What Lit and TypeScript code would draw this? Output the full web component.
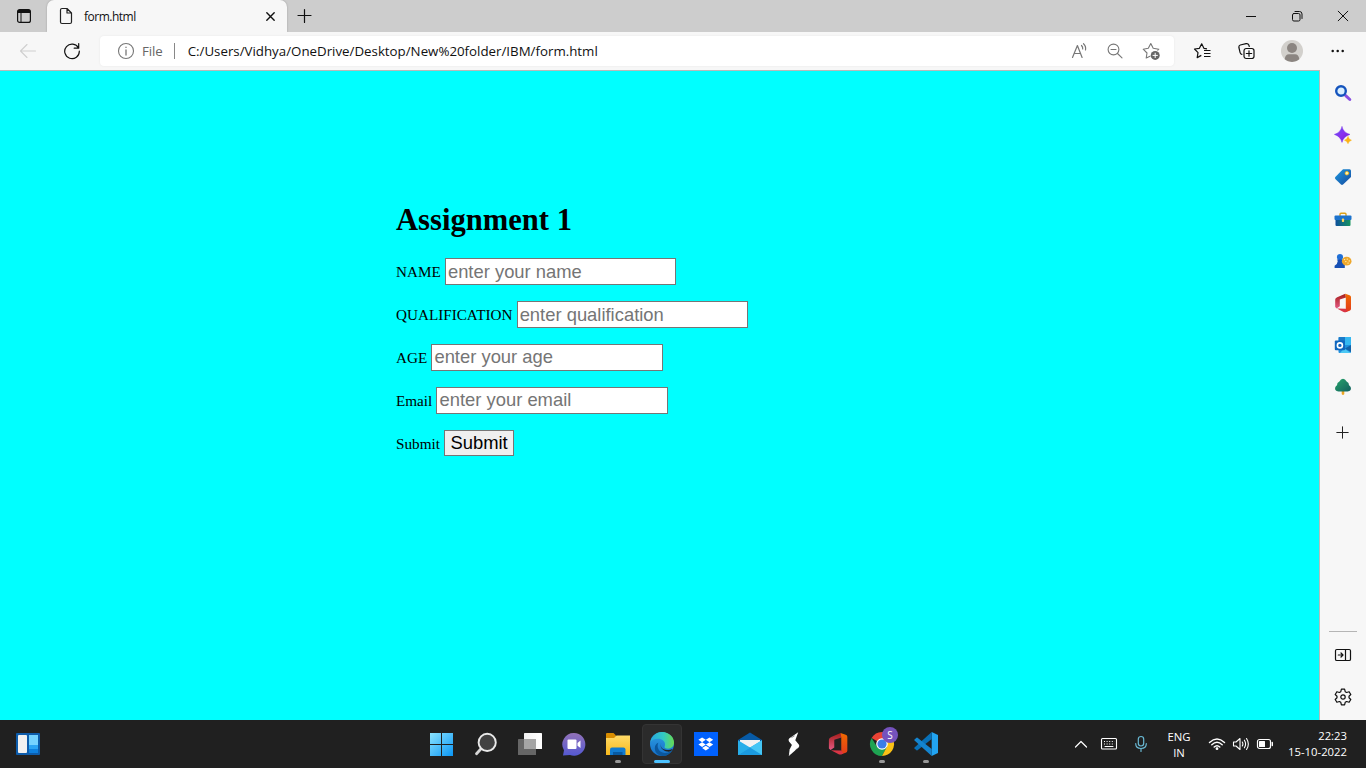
import { LitElement, html, css, svg } from "lit";
import { customElement, property } from "lit/decorators.js";

const icon = (w: number, h: number, body: unknown) =>
  html`<svg width=${w} height=${h} viewBox="0 0 ${w} ${h}" fill="none" stroke-linecap="round" stroke-linejoin="round">${body}</svg>`;

const officeShape = svg`
  <path d="M3.2 4.2L11.3 .8L12 4.6L5.8 6.5V13.2L2.6 15.4L1.2 14V6.6Q1.2 5 3.2 4.2Z" fill="url(#officeLeft)"/>
  <path d="M11.2 .8L15.6 2.2Q17 2.7 17 4V16Q17 17.3 15.6 17.8L11.4 19.2L11.8 15.8V4.7Z" fill="url(#officeRight)"/>
  <path d="M3 15.6L11.8 15.8L13.5 18.5L11.2 19.2Q10.4 19.3 9.6 19Z" fill="#d93545"/>
  <defs>
    <linearGradient id="officeLeft" x1="0" y1="0" x2="0" y2="1"><stop stop-color="#a51d1a"/><stop offset="1" stop-color="#e45a84"/></linearGradient>
    <linearGradient id="officeRight" x1="0" y1="0" x2="0" y2="1"><stop stop-color="#f06a00"/><stop offset="1" stop-color="#e23a1c"/></linearGradient>
  </defs>`;

const sidebarIcons = [
  icon(18, 18, svg`
    <path d="M11.7 11.7L15.8 15.5" stroke="#8a4fe0" stroke-width="3"/>
    <circle cx="7" cy="7" r="4.8" fill="#d9f0ff" stroke="#1554bd" stroke-width="2.4"/>`),
  icon(18, 18, svg`
    <path d="M8 .8Q9.2 6.6 16 8.4Q9.6 10.2 8 16.4Q6.4 10.2 .4 8.4Q6.6 6.6 8 .8Z" fill="url(#spark)" stroke="#7c35ea" stroke-width=".5"/>
    <path d="M14 10.6Q14.7 13.4 17.5 14.2Q14.8 15 14 17.8Q13.2 15 10.4 14.2Q13.3 13.4 14 10.6Z" fill="#fcb316" stroke="#fcb316" stroke-width=".4"/>
    <defs><linearGradient id="spark" x1="0" y1="0" x2="1" y2="1"><stop stop-color="#5b5bf6"/><stop offset=".5" stop-color="#8b2ff0"/><stop offset="1" stop-color="#6b22c9"/></linearGradient></defs>`),
  icon(18, 18, svg`
    <path d="M9 1.2H15.5Q17 1.2 17 2.7V9L9 16.5Q8 17.3 7 16.5L1.3 11Q.5 10 1.3 9Z" fill="url(#tag)"/>
    <circle cx="12.9" cy="5.2" r="1.8" fill="#fff3a8" stroke="#f5b51b" stroke-width=".8"/>
    <defs><linearGradient id="tag" x1="0" y1="0" x2="1" y2="1"><stop stop-color="#1e9ae0"/><stop offset="1" stop-color="#164a9f"/></linearGradient></defs>`),
  icon(18, 18, svg`
    <path d="M6 6V4.2Q6 3.2 7 3.2H11Q12 3.2 12 4.2V6" stroke="#dda21b" stroke-width="1.4"/>
    <rect x="1.5" y="8" width="15" height="8" rx="1" fill="url(#toolbox)"/>
    <rect x=".5" y="5.5" width="17" height="4.5" rx="1" fill="#1c73cc"/>
    <rect x="7.9" y="8.5" width="2.2" height="3.4" rx=".7" fill="#ffd65c"/>
    <defs><linearGradient id="toolbox"><stop stop-color="#0e4f9c"/><stop offset="1" stop-color="#16945f"/></linearGradient></defs>`),
  icon(18, 18, svg`
    <circle cx="6" cy="5" r="3.1" fill="#1f6fd6"/>
    <path d="M2.8 7.5H9.2L8.2 9Q8.4 11.6 10.8 13V16H.6V13.8Q3.6 12 3.8 9Z" fill="#1750b4"/>
    <ellipse cx="12.7" cy="9.2" rx="4.8" ry="4.4" fill="#eea72b"/>
    <path d="M10.5 7.6H10.6M13.2 7.1H13.3M15.2 8.9H15.3M11.8 9.6H11.9M14 11.1H14.1" stroke="#fff0b5" stroke-width="1.4"/>`),
  icon(18, 20, officeShape),
  icon(18, 18, svg`
    <rect x="4.5" y="1" width="12.5" height="16" rx="1" fill="#1f8fdd"/>
    <path d="M4.7 1.2H11V6H4.7Z" fill="#1a7ac8"/><path d="M11 1H17V9H11Z" fill="#35b8f1"/>
    <path d="M17 9V16L11 12.5Z" fill="#1262a8"/><path d="M6 17H17L10 12.4Z" fill="#4cc8f4"/>
    <rect x=".8" y="4.5" width="10.2" height="9.8" rx="1" fill="#1067be"/>
    <circle cx="5.9" cy="9.4" r="2.5" stroke="#fff" stroke-width="1.6"/>`),
  icon(18, 18, svg`
    <path d="M7.7 12H10.3V16Q9 17.8 7.7 16Z" fill="#eda522"/>
    <path d="M9 .8Q11.2 1 12.6 3.6Q15.2 4.8 15 7.2Q17.8 9.4 16.6 12Q15.6 13.6 13 13.4H5Q2.4 13.6 1.4 12Q.2 9.4 3 7.2Q2.8 4.8 5.4 3.6Q6.8 1 9 .8Z" fill="url(#tree)"/>
    <defs><linearGradient id="tree" x1="0" y1="0" x2="1" y2="1"><stop stop-color="#27a56b"/><stop offset="1" stop-color="#12605e"/></linearGradient></defs>`),
];

const taskIcons = [
  icon(28, 28, svg`
    <path d="M2 3H13V14H2ZM14 3H25V14H14ZM2 15H13V26H2ZM14 15H25V26H14Z" fill="url(#win)"/>
    <defs><linearGradient id="win" x1="0" y1="0" x2="1" y2="1"><stop stop-color="#8ce4ff"/><stop offset="1" stop-color="#0a96f5"/></linearGradient></defs>`),
  icon(28, 28, svg`
    <path d="M9.3 18.5L4.5 23.7" stroke="#d7d7d7" stroke-width="2.8"/>
    <circle cx="15.2" cy="12.4" r="8.6" fill="#414141" stroke="#e9e9e9" stroke-width="1.9"/>`),
  icon(28, 28, svg`
    <rect x="8" y="3" width="18" height="16" rx=".6" fill="url(#tv)"/>
    <rect x="2" y="9" width="18" height="16" rx=".6" fill="#666"/>
    <rect x="8" y="9" width="12" height="10" fill="#a5a5a5"/>
    <defs><linearGradient id="tv"><stop stop-color="#f2f2f2"/><stop offset="1" stop-color="#fff"/></linearGradient></defs>`),
  icon(28, 28, svg`
    <path d="M14 3A11.4 11.4 0 1 1 10 25.1L3 25.6L4 20.3A11.4 11.4 0 0 1 14 3Z" fill="url(#chat)"/>
    <rect x="7.5" y="9.5" width="9" height="9.5" rx="1" fill="#fff"/><path d="M17.5 13L20.5 10.5V18L17.5 15.7Z" fill="#fff"/>
    <defs><linearGradient id="chat" x1="0" y1="0" x2="0" y2="1"><stop stop-color="#9272b8"/><stop offset="1" stop-color="#5459d2"/></linearGradient></defs>`),
  icon(28, 28, svg`
    <path d="M2 4Q2 3 3 3H9.5L12 5.5V10H2Z" fill="#d98d00"/>
    <path d="M2 8H10L12.5 5.5H26V25H2Z" fill="url(#folder)"/>
    <path d="M6 25V19.5Q6 17.5 8 17.5H19.5Q21.5 17.5 21.5 19.5V25Z" fill="#117bd0"/><path d="M9 25V22H18.5V25Z" fill="#0759a1"/>
    <defs><linearGradient id="folder" x1="0" y1="0" x2="0" y2="1"><stop stop-color="#ffdb68"/><stop offset="1" stop-color="#f9b91c"/></linearGradient></defs>`),
  icon(28, 28, svg`
    <circle cx="14" cy="14" r="12" fill="url(#edgeBlue)"/>
    <path d="M2.3 12.2C3.2 6.4 8 2 14 2C21 2 26 7.2 26 12.5C26 17 22.5 19.2 18.6 18.6C15.5 18 16.8 16.8 17 14.8C17.3 11.2 14 8.8 10.3 8.8C6 8.8 3.3 10.6 2.3 12.2Z" fill="url(#edgeGreen)"/>
    <path d="M10.3 12.8C8.3 17 10.8 22.6 16.6 23C20.2 23.2 23.2 21.5 24.5 19.7C22.6 23.8 18.5 26 14.4 26C9.5 25.5 6.8 22 6.8 18.3C6.8 15.5 8.3 13.6 10.3 12.8Z" fill="#0b579c"/>
    <path d="M13.2 13C11.7 15.6 13.6 19.8 19 20C21.4 20.1 23.5 19.4 24.8 18.7C23.9 20.9 22 21.8 19.5 21.6C14.6 21 11.2 16.6 13.2 13Z" fill="#202020"/>
    <defs>
      <linearGradient id="edgeBlue" x1="0" y1="0" x2="0" y2="1"><stop stop-color="#2e9fe4"/><stop offset="1" stop-color="#146fc8"/></linearGradient>
      <linearGradient id="edgeGreen"><stop stop-color="#27a6e0"/><stop offset=".55" stop-color="#32c9c3"/><stop offset="1" stop-color="#67db50"/></linearGradient>
    </defs>`),
  icon(28, 28, svg`
    <rect x="2" y="2" width="24" height="24" fill="#0061fe"/>
    <path d="M10.1 7.5L13.8 9.8L10.1 12.2L6.4 9.8ZM17.5 7.5L21.2 9.8L17.5 12.2L13.8 9.8ZM10.1 12.2L13.8 14.5L10.1 16.9L6.4 14.5ZM17.5 12.2L21.2 14.5L17.5 16.9L13.8 14.5ZM13.8 15.7L17.5 18L13.8 20.4L10.1 18Z" fill="#fff"/>`),
  icon(28, 28, svg`
    <path d="M2 10L14 2.5L26 10V16H2Z" fill="#075aa6"/><path d="M4 10H24V14L14 18L4 14Z" fill="#f2f2f2"/>
    <path d="M2 10.2L14 17.5L26 10.2V25H2Z" fill="#28aee9"/><path d="M2 25L26 10.2V25Z" fill="#45c6f5"/><path d="M2 25L14 17.5L26 25Z" fill="#1b9be0"/>`),
  icon(28, 28, svg`<path d="M18.2 2.2L9.4 8.2Q7.8 9.8 9 11.4L12.6 15.8L8.8 26L18.6 17.4Q20 16 18.8 14.4L15.3 10.2Z" fill="#fff"/><path d="M12.8 13.2L9.6 19.4L8.8 26L13.2 18Z" fill="#fff"/><path d="M14.2 6L11.8 7.4M15.5 20.2L17 18.8" stroke="#202020" stroke-width=".5"/>`),
  html`<svg width="28" height="28" viewBox="-3 -1.8 24 24">${officeShape}</svg>`,
  icon(28, 28, svg`
    <path d="M14 14L3.6 8A12 12 0 0 1 24.4 8L25 9H14Z" fill="#ea4335"/>
    <path d="M3.6 8A12 12 0 0 0 14 26L19 16.5L14 14L9 16.7Z" fill="#1ea352"/>
    <path d="M14 26A12 12 0 0 0 25 9H14L19 16.5Z" fill="#fbc116"/>
    <circle cx="14" cy="14" r="5.8" fill="#fff"/><circle cx="14" cy="14" r="4.6" fill="#3b7de8"/>`),
  icon(28, 28, svg`
    <path d="M19.7 2L26 5V23L19.7 26Z" fill="#22a4f1"/>
    <path d="M19.7 2V9L5.5 20.3Q5 20.6 4.5 20.2L2.5 18.5Q2 18 2.5 17.5Z" fill="#0870b7"/>
    <path d="M19.7 26V19L5.5 7.8Q5 7.4 4.5 7.8L2.5 9.6Q2 10.1 2.5 10.6Z" fill="#1484cf"/>`),
];

@customElement("form-row")
class FormRow extends LitElement {
  @property() label = "";
  @property() hint = "";
  @property({ type: Boolean }) submit = false;

  static styles = css`
    :host { display: flex; align-items: flex-start; height: 43px; gap: 4.2px; }
    label { font: 15.2px/17px "Liberation Serif", serif; padding-top: 5px; color: #000; white-space: nowrap; }
    input, button { box-sizing: border-box; font: 18.4px "Liberation Sans", sans-serif; border: 1px solid #767676; border-radius: 0; margin: 0; }
    input { width: 231.4px; height: 27px; padding: 0 2px; background: #fff; }
    input::placeholder { color: #757575; opacity: 1; }
    :host([raised]) input { padding-bottom: 2px; }
    button { width: 70px; height: 26px; padding: 0; background: #efefef; color: #000; }
  `;

  render() {
    return html`<label>${this.label}</label>${this.submit
      ? html`<button>Submit</button>`
      : html`<input placeholder=${this.hint} />`}`;
  }
}

@customElement("app-root")
class AppRoot extends LitElement {
  static styles = css`
    :host { display: flex; flex-direction: column; width: 1366px; height: 768px; overflow: hidden; font-family: "Open Sans", "Noto Sans", sans-serif; color: #111; }
    svg { display: block; flex: none; }
    .tabs { display: flex; height: 32px; background: #cdcdcd; align-items: stretch; flex: none; }
    .cell { display: flex; align-items: center; justify-content: center; flex: none; }
    .actions { width: 47px; }
    .tab { display: flex; align-items: center; width: 240px; box-sizing: border-box; padding: 0 9px 0 11px; background: #f7f7f7; border-radius: 7px 7px 0 0; font-size: 12px; box-shadow: 0 0 2px #999; clip-path: inset(0 -3px 0 -3px); }
    .title { flex: 1; padding-left: 10px; letter-spacing: -0.5px; }
    .new { width: 35px; }
    .win { display: flex; margin-left: auto; }
    .win .cell { width: 46px; }
    .tools { display: flex; height: 38px; align-items: center; background: #f7f7f7; flex: none; box-sizing: border-box; }
    .back { width: 56px; }
    .reload { width: 32px; margin-right: 12px; }
    .address { display: flex; align-items: center; box-sizing: border-box; width: 1074px; height: 30px; background: #fff; border-radius: 4px; padding: 0 5px 0 17px; font-size: 13.3px; box-shadow: 0 0 2px #e4e4e4; }
    .file { color: #666; padding: 0 11px 0 7px; letter-spacing: -0.1px; }
    .bar { width: 1px; height: 16px; background: #888; margin-right: 13px; }
    .url { flex: 1; white-space: nowrap; color: #111; }
    .address .cell { width: 36px; }
    .right { display: flex; padding-left: 5px; }
    .right .cell { width: 45.2px; }
    .main { display: flex; height: 650px; flex: none; }
    .page { width: 1320px; box-sizing: border-box; border-top: 1px solid #b9b9b9; border-right: 1px solid #b9b9b9; background: #0ff; padding: 132px 0 0 396px; }
    h1 { margin: 0 0 21px; font: bold 30.6px/34px "Liberation Serif", serif; color: #000; }
    .side { display: flex; flex-direction: column; width: 46px; background: #f7f7f7; align-items: center; padding: 2px 0; box-sizing: border-box; }
    .side .cell { width: 46px; height: 42px; }
    .side .plus { height: 50px; }
    .rule { margin-top: auto; width: 28px; height: 1px; background: #b5b5b5; margin-bottom: 2px; }
    .taskbar { display: grid; grid-template-columns: 420px 528px 1fr; height: 48px; background: #202020; color: #fff; }
    .widgets { display: flex; align-items: center; padding-left: 16px; }
    .apps { display: flex; }
    .app { display: flex; width: 44px; position: relative; align-items: center; justify-content: center; }
    .app.active::before { content: ""; position: absolute; inset: 4px 2px; box-sizing: border-box; border: 1px solid #343434; border-radius: 4px; background: #2b2b2b; }
    .app svg { position: relative; }
    .app.open::after { content: ""; position: absolute; bottom: 5px; left: 19px; width: 6px; height: 3px; border-radius: 2px; background: #989898; }
    .app.active::after { left: 14px; width: 16px; background: #4cc2ff; }
    .badge { position: absolute; left: 22px; top: 7px; width: 16px; height: 16px; border-radius: 8px; background: #7552bd; font: 10px/16px "Open Sans", sans-serif; text-align: center; color: #fff; }
    .tray { display: flex; align-items: center; font-size: 11.3px; line-height: 16px; }
    .up { width: 28px; margin-left: 119px; }
    .kb { width: 28px; }
    .mic { width: 36px; }
    .lang { width: 40px; text-align: center; letter-spacing: 0; padding-top: 2px; }
    .net { width: 36px; }
    .vol { width: 12px; }
    .bat { width: 36px; }
    .clock { margin-left: auto; padding-right: 19px; text-align: right; }
  `;

  render() {
    return html`
      <div class="tabs">
        <div class="cell actions">${icon(16, 16, svg`<rect x="1.6" y="1.6" width="12.8" height="12.8" rx="2" stroke="#111" stroke-width="1.2"/><path d="M2 2H14V5H2Z" fill="#111"/><path d="M5 5V14" stroke="#111"/>`)}</div>
        <div class="tab">
          ${icon(16, 18, svg`<path d="M2.5 3Q2.5 1.5 4 1.5H9L13.5 6V15Q13.5 16.5 12 16.5H4Q2.5 16.5 2.5 15ZM9 1.7V6H13.3" stroke="#222" stroke-width="1.2"/>`)}
          <span class="title">form.html</span>
          ${icon(16, 16, svg`<path d="M4.8 4.8L12.2 12.2M12.2 4.8L4.8 12.2" stroke="#111" stroke-width="1.4"/>`)}
        </div>
        <div class="cell new">${icon(16, 16, svg`<path d="M7.5 1.5V14.5M1 7.5H14" stroke="#111" stroke-width="1.2"/>`)}</div>
        <div class="win">
          <div class="cell">${icon(12, 12, svg`<path d="M1 6.5H11" stroke="#111" stroke-linecap="butt"/>`)}</div>
          <div class="cell">${icon(12, 12, svg`<rect x="1.5" y="3.5" width="7.5" height="7.5" rx="1.4" stroke="#111"/><path d="M4 1.5H8.5Q11 1.5 11 4V8.5" stroke="#111"/>`)}</div>
          <div class="cell">${icon(12, 12, svg`<path d="M1.2 1.2L10.8 10.8M10.8 1.2L1.2 10.8" stroke="#111"/>`)}</div>
        </div>
      </div>
      <div class="tools">
        <div class="cell back">${icon(18, 16, svg`<path d="M16.5 8H1.5M8 1.5L1.5 8L8 14.5" stroke="#cfcfcf" stroke-width="1.1"/>`)}</div>
        <div class="cell reload">${icon(18, 18, svg`<path d="M15.5 6A7.3 7.3 0 1 0 16.3 9M15.7 1.6V6.2H11.2" stroke="#111" stroke-width="1.2"/>`)}</div>
        <div class="address">
          ${icon(18, 18, svg`<circle cx="9" cy="9" r="7.5" stroke="#777" stroke-width="1.1"/><path d="M9 8V13M9 5.2V5.4" stroke="#777" stroke-width="1.3"/>`)}
          <span class="file">File</span><span class="bar"></span>
          <span class="url">C:/Users/Vidhya/OneDrive/Desktop/New%20folder/IBM/form.html</span>
          <div class="cell">${icon(18, 18, svg`<path d="M2.5 15.5L7.4 3.5L12.1 15.5M4.2 11.5H10.4M11.5 3.5Q13 5 12.7 7M13.5 1.7Q16.2 4 15.5 8" stroke="#777" stroke-width="1.2"/>`)}</div>
          <div class="cell">${icon(18, 18, svg`<circle cx="7.5" cy="7.5" r="5.4" stroke="#777" stroke-width="1.1"/><path d="M11.5 11.5L16 15.8M5 7.5H10" stroke="#777" stroke-width="1.1"/>`)}</div>
          <div class="cell">${icon(18, 18, svg`<path d="M15.8 8.2L16.8 7.2L11.2 6.3L8.8 1.5L6.3 6.3L1.2 7.2L5 11L4.2 16L8 14.2" stroke="#777" stroke-width="1.1"/><circle cx="13.2" cy="13.4" r="4.5" fill="#666"/><path d="M13.2 11.2V15.6M11 13.4H15.4" stroke="#fff"/>`)}</div>
        </div>
        <div class="right">
          <div class="cell">${icon(18, 18, svg`<path d="M14 6.8L10.9 6.3L8.7 1.8L6.4 6.3L1.5 7L5 10.6L4.2 15.6L8.3 13.4M11 8.5H17.5M11 11.5H17.5M11 14.5H17.5" stroke="#111" stroke-width="1.2" stroke-linecap="butt"/>`)}</div>
          <div class="cell">${icon(18, 18, svg`<rect x="6" y="6.5" width="10" height="10" rx="2.2" stroke="#111" stroke-width="1.2"/><path d="M11 8.8V14.2M8.3 11.5H13.7M3.9 12.4Q2.5 12 2.1 10.6L.9 5.5Q.6 3.6 2.3 3L8.1 1.6Q10.1 1.2 10.8 3L11.3 4.5" stroke="#111" stroke-width="1.2"/>`)}</div>
          <div class="cell">${icon(24, 24, svg`<circle cx="12" cy="12" r="11" fill="#d2d0cc"/><circle cx="12" cy="9" r="5" fill="#8b8581"/><path d="M4.7 20.2Q5.3 15.3 9 15.3H15Q18.7 15.3 19.3 20.2A11 11 0 0 1 4.7 20.2Z" fill="#8b8581"/>`)}</div>
          <div class="cell">${icon(16, 16, svg`<path d="M3.7 8V8.01M8.7 8V8.01M13.7 8V8.01" stroke="#111" stroke-width="2.5"/>`)}</div>
        </div>
      </div>
      <div class="main">
        <div class="page">
          <h1>Assignment 1</h1>
          <form-row label="NAME" hint="enter your name"></form-row>
          <form-row label="QUALIFICATION" hint="enter qualification"></form-row>
          <form-row label="AGE" hint="enter your age" raised></form-row>
          <form-row label="Email" hint="enter your email" raised></form-row>
          <form-row label="Submit" submit></form-row>
        </div>
        <div class="side">
          ${sidebarIcons.map((i) => html`<div class="cell">${i}</div>`)}
          <div class="cell plus">${icon(14, 14, svg`<path d="M6.5 .8V12.2M.8 6.5H12.2" stroke="#222"/>`)}</div>
          <div class="rule"></div>
          <div class="cell">${icon(18, 16, svg`<rect x="1.5" y="2.5" width="15" height="11" rx="1.3" stroke="#111" stroke-width="1.2"/><path d="M11.5 2.5V13.5M4.3 8H8.5M7 6L9 8L7 10" stroke="#111" stroke-width="1.2"/>`)}</div>
          <div class="cell">${icon(18, 18, svg`<path d="M7.4 1.2H10.6L11.2 3.7L12.6 4.5L15.1 3.7L16.8 6.5L15 8.2V9.8L16.8 11.5L15.1 14.3L12.6 13.5L11.2 14.3L10.6 16.8H7.4L6.8 14.3L5.4 13.5L2.9 14.3L1.2 11.5L3 9.8V8.2L1.2 6.5L2.9 3.7L5.4 4.5L6.8 3.7Z" stroke="#111" stroke-width="1.2"/><circle cx="9" cy="9" r="2.2" stroke="#111" stroke-width="1.2"/>`)}</div>
        </div>
      </div>
      <div class="taskbar">
        <div class="widgets">${icon(24, 22, svg`<rect width="24" height="22" rx="1" fill="#0d5cab"/><rect x="2" y="2" width="9" height="18" rx="1" fill="#f1f1f1"/><path d="M13 2H22V12H13Z" fill="#75d2ff"/><path d="M13 12H22V16H13Z" fill="#2ba4f4"/><path d="M13 16H22V20H13Z" fill="#0d80df"/>`)}</div>
        <div class="apps">
          ${taskIcons.map((i, n) => html`<div class="app ${[4, 5, 10, 11].includes(n) ? "open" : ""} ${n === 5 ? "active" : ""}">${i}${n === 10 ? html`<span class="badge">S</span>` : ""}</div>`)}
        </div>
        <div class="tray">
          <div class="cell up">${icon(14, 10, svg`<path d="M1.5 8L7 2.5L12.5 8" stroke="#fff" stroke-width="1.2"/>`)}</div>
          <div class="cell kb">${icon(18, 14, svg`<rect x="1.5" y="1.5" width="15" height="10.5" rx="1" stroke="#fff" stroke-width="1.1"/><path d="M4 4.5H14.5M4 7H14.5" stroke="#fff" stroke-dasharray="1 1.6" stroke-linecap="butt" stroke-width="1.2"/><path d="M5 9.5H13" stroke="#fff"/>`)}</div>
          <div class="cell mic">${icon(14, 18, svg`<rect x="4.3" y="1.5" width="5.4" height="9.5" rx="2.7" stroke="#69b9d4" stroke-width="1.2"/><path d="M1.7 8.5Q1.7 13.5 7 13.5Q12.3 13.5 12.3 8.5M7 13.5V16.5" stroke="#69b9d4" stroke-width="1.2"/>`)}</div>
          <div class="lang">ENG<br />IN</div>
          <div class="cell net">${icon(18, 14, svg`<path d="M1.5 5.5Q9-1.5 16.5 5.5M3.8 7.8Q9 2.9 14.2 7.8M6.2 10Q9 7.4 11.8 10" stroke="#fff" stroke-width="1.4"/><circle cx="9" cy="11.7" r="1.4" fill="#fff"/>`)}</div>
          <div class="cell vol">${icon(18, 14, svg`<path d="M1.5 5H4L8 1.5V12.5L4 9H1.5ZM10.3 5Q11.5 7 10.3 9M12.4 3.2Q14.8 7 12.4 10.8M14.5 1.5Q18.2 7 14.5 12.5" stroke="#fff" stroke-width="1.1"/>`)}</div>
          <div class="cell bat">${icon(18, 12, svg`<rect x="1.5" y="1.5" width="13" height="9" rx="2" stroke="#fff" stroke-width="1.2"/><rect x="3" y="3" width="6" height="6" rx=".5" fill="#fff"/><path d="M16.3 4.5V7.5" stroke="#fff" stroke-width="1.4"/>`)}</div>
          <div class="clock">22:23<br />15-10-2022</div>
        </div>
      </div>
    `;
  }
}
